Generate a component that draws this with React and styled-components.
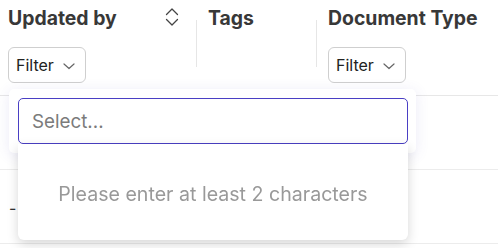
import React from 'react';
import styled, { createGlobalStyle } from 'styled-components';

const Global = createGlobalStyle`
    body {
        margin: 0;
        background: #fff;
        font-family: Inter, 'Noto Sans', sans-serif;
    }
`;

const SortIcon = () => (
    <svg width='14' height='20' viewBox='0 0 14 20' fill='none' stroke='#444' strokeWidth='1.3' strokeLinecap='round' strokeLinejoin='round'>
        <path d='M1.5 7.5 L7 2 L12.5 7.5' />
        <path d='M1.5 12.5 L7 18 L12.5 12.5' />
    </svg>
);

const Chevron = () => (
    <svg width='12' height='7' viewBox='0 0 12 7' fill='none' stroke='#666' strokeWidth='1.2' strokeLinecap='round' strokeLinejoin='round'>
        <path d='M1 1 L6 5.5 L11 1' />
    </svg>
);

const columns = [
    { title: 'Updated by', width: '196px', pad: '8px', sortable: true, filter: true },
    { title: 'Tags', width: '119px', pad: '11px', sortable: false, filter: false },
    { title: 'Document Type', width: 'auto', pad: '11px', sortable: false, filter: true },
];

const App = () => {
    return (
        <Page>
            <Global />
            <HeaderRow>
                {columns.map((col, i) => (
                    <React.Fragment key={col.title}>
                        {i > 0 && <Divider />}
                        <HeaderCell $width={col.width} $pad={col.pad}>
                            <TitleRow>
                                <Title>{col.title}</Title>
                                {col.sortable && <SortIcon />}
                            </TitleRow>
                            {col.filter && (
                                <FilterButton>
                                    Filter <Chevron />
                                </FilterButton>
                            )}
                        </HeaderCell>
                    </React.Fragment>
                ))}
            </HeaderRow>
            <Row />
            <Row>
                <Dash>-</Dash>
            </Row>

            <Popover>
                <SearchInput placeholder='Select...' autoFocus />
                <Menu>
                    <Empty>Please enter at least 2 characters</Empty>
                </Menu>
            </Popover>
        </Page>
    );
};

export default App;

const Page = styled.div`
    position: relative;
    width: 498px;
    height: 248px;
    overflow: hidden;
`;

const HeaderRow = styled.div`
    display: flex;
    align-items: flex-start;
    height: 95px;
    border-bottom: 1px solid #e7e7e7;
`;

const HeaderCell = styled.div`
    box-sizing: border-box;
    width: ${(p) => p.$width};
    flex: ${(p) => (p.$width === 'auto' ? '1' : 'none')};
    padding: 7px 17px 0 ${(p) => p.$pad};
`;

const Divider = styled.div`
    width: 1px;
    height: 47px;
    margin-top: 20px;
    background: #e6e6e6;
    flex: none;
`;

const TitleRow = styled.div`
    display: flex;
    align-items: center;
    justify-content: space-between;
    height: 22px;
    svg {
        margin-top: -2px;
    }
`;

const Title = styled.span`
    font-size: 19.4px;
    line-height: 22px;
    font-weight: 700;
    color: #383838;
    white-space: nowrap;
`;

const FilterButton = styled.button`
    margin-top: 18px;
    display: inline-flex;
    align-items: center;
    gap: 9px;
    height: 36px;
    padding: 0 10px 0 7px;
    background: #fff;
    border: 1px solid #cfcfcf;
    border-radius: 6px;
    font-family: Inter, sans-serif;
    font-size: 16px;
    color: #222;
    svg {
        margin-top: 2px;
    }
`;

const Row = styled.div`
    height: 73px;
    border-bottom: 1px solid #ececec;
    display: flex;
    align-items: center;
    padding-left: 9px;
`;

const Dash = styled.span`
    font-size: 16px;
    color: #333;
    margin-top: 2px;
`;

const Popover = styled.div`
    position: absolute;
    left: 9px;
    top: 89px;
    width: 407px;
    height: 64px;
    box-sizing: border-box;
    padding: 9px 8px 0 9px;
    background: #fff;
    border-radius: 5px;
    box-shadow: 0 2px 14px rgba(90, 80, 190, 0.12);
`;

const SearchInput = styled.input`
    box-sizing: border-box;
    display: block;
    width: 390px;
    height: 46px;
    padding: 0 13px;
    border: 1px solid #4a3fc4;
    border-radius: 5px;
    outline: none;
    font-family: Inter, sans-serif;
    font-size: 18.8px;
    color: #222;
    caret-color: #222;
    &::placeholder {
        color: #7b7b7b;
    }
`;

const Menu = styled.div`
    position: absolute;
    left: 9px;
    top: 55px;
    width: 390px;
    height: 96px;
    background: #fff;
    border-radius: 0 0 6px 6px;
    box-shadow: 0 4px 12px rgba(0, 0, 0, 0.16);
    display: flex;
    align-items: center;
    justify-content: center;
    padding-top: 3px;
    box-sizing: border-box;
`;

const Empty = styled.span`
    font-size: 19.6px;
    color: #999;
`;
